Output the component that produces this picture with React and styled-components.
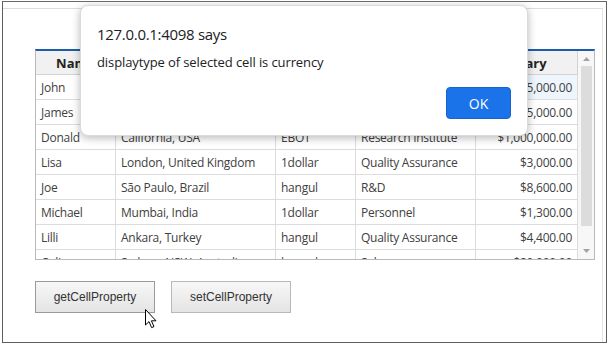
import styled, { createGlobalStyle } from "styled-components";

const GlobalStyle = createGlobalStyle`
  html, body {
    margin: 0;
    padding: 0;
    background: #ffffff;
  }
  body {
    font-family: "Open Sans", "Noto Sans", sans-serif;
  }
`;

const columns = [
  { key: "name", title: "Name", width: 80 },
  { key: "address", title: "Address", width: 160 },
  { key: "font", title: "Font", width: 80 },
  { key: "dept", title: "Department", width: 120 },
  { key: "salary", title: "Salary", width: 102, right: true },
];

const rows = [
  { name: "John", address: "New York, USA", font: "1dollar", dept: "Sales", salary: "$25,000.00", selected: true },
  { name: "James", address: "Seoul, Korea", font: "hangul", dept: "Marketing", salary: "$15,000.00" },
  { name: "Donald", address: "California, USA", font: "EBOT", dept: "Research Institute", salary: "$1,000,000.00" },
  { name: "Lisa", address: "London, United Kingdom", font: "1dollar", dept: "Quality Assurance", salary: "$3,000.00" },
  { name: "Joe", address: "São Paulo, Brazil", font: "hangul", dept: "R&D", salary: "$8,600.00" },
  { name: "Michael", address: "Mumbai, India", font: "1dollar", dept: "Personnel", salary: "$1,300.00" },
  { name: "Lilli", address: "Ankara, Turkey", font: "hangul", dept: "Quality Assurance", salary: "$4,400.00" },
  { name: "Colin", address: "Sydney, NSW, Australia", font: "hangul", dept: "Sales", salary: "$20,000.00" },
];

export default function App() {
  return (
    <>
      <GlobalStyle />
      <Frame>
        <Sheet>
          <Grid>
            <Table>
              <HeaderRow>
                {columns.map((c) => (
                  <HeadCell key={c.key} $w={c.width}>
                    {c.title}
                  </HeadCell>
                ))}
              </HeaderRow>
              <Body>
                {rows.map((r) => (
                  <Row key={r.name}>
                    {columns.map((c) => (
                      <Cell
                        key={c.key}
                        $w={c.width}
                        $right={c.right}
                        $selected={r.selected && c.key === "salary"}
                      >
                        {r[c.key]}
                      </Cell>
                    ))}
                  </Row>
                ))}
              </Body>
            </Table>
            <Scrollbar>
              <Arrow viewBox="0 0 7 4">
                <path d="M0 4 L3.5 0 L7 4 Z" fill="#a3a3a3" />
              </Arrow>
              <Thumb />
              <Arrow viewBox="0 0 7 4">
                <path d="M0 0 L3.5 4 L7 0 Z" fill="#a3a3a3" />
              </Arrow>
            </Scrollbar>
          </Grid>
          <Buttons>
            <Button $hover>getCellProperty</Button>
            <Button>setCellProperty</Button>
          </Buttons>
          <Cursor viewBox="0 0 12 20">
            <path
              d="M0.5 0.5 L0.5 16 L4 12.6 L6.6 18.6 L9 17.6 L6.4 11.8 L11 11.8 Z"
              fill="#ffffff"
              stroke="#000000"
              strokeWidth="1"
              strokeLinejoin="miter"
            />
          </Cursor>
        </Sheet>
        <Dialog>
          <DialogTitle>127.0.0.1:4098 says</DialogTitle>
          <DialogText>displaytype of selected cell is currency</DialogText>
          <DialogActions>
            <OkButton>OK</OkButton>
          </DialogActions>
        </Dialog>
      </Frame>
    </>
  );
}

const Frame = styled.div`
  position: relative;
  box-sizing: border-box;
  margin: 1px 0 0 2px;
  width: 605px;
  height: 342px;
  border: 1px solid #5e5e5e;
  border-top-color: #6a6a6a;
  padding-top: 6px;
  overflow: hidden;
`;

const Sheet = styled.div`
  position: relative;
  box-sizing: border-box;
  height: 100%;
  margin-right: 3px;
  border-top: 1px solid #dedede;
  border-right: 1px solid #e4e4e4;
  padding: 40px 0 0 32px;
`;

const Grid = styled.div`
  display: flex;
  width: 560px;
  box-sizing: border-box;
  border: 1px solid #b9b9b9;
  border-top: 2px solid #1d5caa;
`;

const Table = styled.div`
  display: flex;
  flex-direction: column;
  width: 542px;
`;

const HeaderRow = styled.div`
  display: flex;
  height: 24px;
  background: #f1f1f1;
  border-bottom: 1px solid #d2d2d2;
  box-sizing: border-box;
`;

const HeadCell = styled.div`
  box-sizing: border-box;
  width: ${(p) => p.$w}px;
  border-right: 1px solid #d2d2d2;
  display: flex;
  align-items: center;
  justify-content: center;
  font-size: 13px;
  font-weight: 700;
  color: #222222;
`;

const Body = styled.div`
  height: 184px;
  overflow: hidden;
`;

const Row = styled.div`
  display: flex;
  height: 25px;
  box-sizing: border-box;
  border-bottom: 1px solid #dcdcdc;
`;

const Cell = styled.div`
  box-sizing: border-box;
  width: ${(p) => p.$w}px;
  border-right: 1px solid #dcdcdc;
  padding: 0 5px;
  display: flex;
  align-items: center;
  justify-content: ${(p) => (p.$right ? "flex-end" : "flex-start")};
  background: ${(p) => (p.$selected ? "#eef5fc" : "#ffffff")};
  font-size: 12px;
  letter-spacing: -0.25px;
  color: #404040;
  white-space: nowrap;
  overflow: hidden;
`;

const Scrollbar = styled.div`
  flex: 1;
  display: flex;
  flex-direction: column;
  align-items: center;
  background: #f7f7f7;
  padding: 6px 0;
  gap: 5px;
`;

const Arrow = styled.svg`
  width: 7px;
  height: 4px;
  flex: none;
`;

const Thumb = styled.div`
  flex: 1;
  width: 11px;
  margin-bottom: 18px;
  background: #dcdcdc;
`;

const Buttons = styled.div`
  display: flex;
  gap: 16px;
  margin-top: 21px;
`;

const Button = styled.button`
  width: 120px;
  height: 32px;
  padding: 0;
  border: 1px solid ${(p) => (p.$hover ? "#9a9a9a" : "#b8b8b8")};
  background: linear-gradient(#f7f7f7, #e4e4e4);
  font-family: "Liberation Sans", Arial, sans-serif;
  font-size: 12px;
  color: #333333;
`;

const Cursor = styled.svg`
  position: absolute;
  left: 142px;
  top: 300px;
  width: 12px;
  height: 20px;
`;

const Dialog = styled.div`
  position: absolute;
  left: 77px;
  top: 3px;
  width: 448px;
  box-sizing: border-box;
  padding: 16px;
  background: #ffffff;
  border: 1px solid #dadada;
  border-radius: 8px;
  box-shadow: 0 2px 8px rgba(0, 0, 0, 0.28);
  display: flex;
  flex-direction: column;
  font-family: "Open Sans", "Noto Sans", sans-serif;
  color: #202124;
`;

const DialogTitle = styled.div`
  font-size: 15px;
  letter-spacing: -0.3px;
  line-height: 24px;
`;

const DialogText = styled.div`
  margin-top: 6px;
  font-size: 13px;
  letter-spacing: -0.1px;
  line-height: 20px;
`;

const DialogActions = styled.div`
  display: flex;
  justify-content: flex-end;
  margin-top: 15px;
`;

const OkButton = styled.button`
  width: 65px;
  height: 32px;
  border: 1px solid #1765cc;
  border-radius: 4px;
  background: #1a73e8;
  color: #ffffff;
  font-family: "Open Sans", "Noto Sans", sans-serif;
  font-size: 14px;
`;
